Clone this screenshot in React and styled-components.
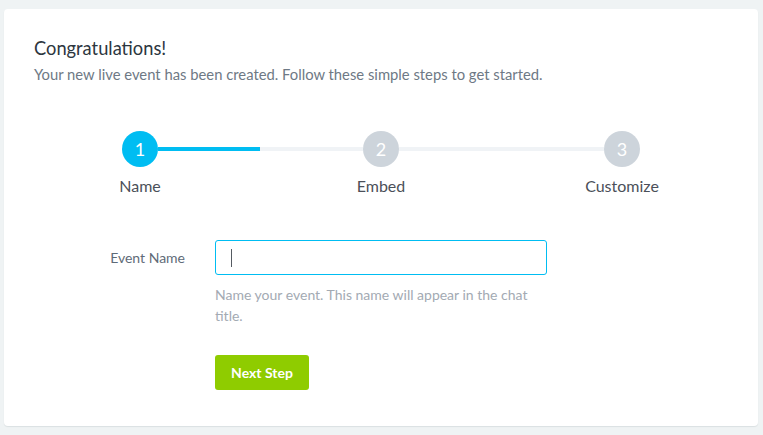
import styled, { createGlobalStyle } from 'styled-components';

const GlobalStyle = createGlobalStyle`
  html, body {
    margin: 0;
    padding: 0;
    background: #eff3f4;
    font-family: Lato, "Open Sans", Arial, sans-serif;
  }
  * {
    box-sizing: border-box;
  }
`;

//layout
const Page = styled.div`
  padding: 9px 5px 9px 4px;
`;

const Card = styled.section`
  background: #fff;
  border-radius: 4px;
  box-shadow: 0 1px 1px rgba(40, 60, 70, 0.1);
  min-height: 417px;
  padding: 28px 30px 36px;
`;

const Title = styled.h2`
  margin: 0;
  font-size: 18.3px;
  font-weight: 400;
  line-height: 22px;
  color: #2d3640;
`;

const Subtitle = styled.p`
  margin: 5px 0 0;
  font-size: 14.8px;
  line-height: 20px;
  color: #6e7985;
`;

//stepper
const Stepper = styled.div`
  margin-top: 47px;
  display: flex;
  flex-direction: column;
  align-items: center;
`;

const Track = styled.div`
  width: 518px;
  display: flex;
  align-items: center;
`;

const Circle = styled.div`
  width: 36px;
  height: 36px;
  border-radius: 50%;
  flex-shrink: 0;
  display: flex;
  align-items: center;
  justify-content: center;
  background: ${p => (p.$active ? '#00bdf2' : '#cdd4db')};
  color: #fff;
  font-size: 18px;
`;

const Connector = styled.div`
  flex: 1;
  height: 4px;
  background: ${p =>
    `linear-gradient(to right, #00bdf2 ${p.$fill}%, #f0f3f6 ${p.$fill}%)`};
`;

const Labels = styled.div`
  margin-top: 9px;
  display: grid;
  grid-template-columns: repeat(3, 241px);
`;

const StepLabel = styled.span`
  text-align: center;
  font-size: 16px;
  line-height: 20px;
  color: #4b5059;
`;

//form
const Form = styled.form`
  margin-top: 44px;
  display: grid;
  grid-template-columns: 151px 332px;
  column-gap: 30px;
  align-items: start;
`;

const FieldLabel = styled.label`
  grid-column: 1;
  text-align: right;
  font-size: 14px;
  line-height: 35px;
  color: #5f6b78;
`;

const Field = styled.div`
  grid-column: 2;
  display: flex;
  flex-direction: column;
  align-items: flex-start;
`;

const InputWrap = styled.div`
  position: relative;
  width: 100%;
`;

const TextInput = styled.input`
  width: 100%;
  height: 35px;
  border: 1px solid #00bdf2;
  border-radius: 3px;
  padding: 0 16px;
  font-family: inherit;
  font-size: 14px;
  color: #333;
  outline: none;
`;

const Caret = styled.span`
  position: absolute;
  left: 16px;
  top: 9px;
  width: 1px;
  height: 18px;
  background: #555b62;
`;

const Help = styled.p`
  margin: 9px 0 0;
  font-size: 14px;
  line-height: 21px;
  color: #a3aab3;
`;

const NextButton = styled.button`
  margin-top: 29px;
  width: 94px;
  height: 35px;
  border: none;
  border-radius: 3px;
  background: #8fcc00;
  color: #fff;
  font-family: inherit;
  font-weight: 700;
  font-size: 14px;
  cursor: pointer;
`;

const steps = ['Name', 'Embed', 'Customize'];

export default function App() {
  return (
    <>
      <GlobalStyle />
      <Page>
        <Card>
          <Title>Congratulations!</Title>
          <Subtitle>
            Your new live event has been created. Follow these simple steps to get started.
          </Subtitle>

          <Stepper>
            <Track>
              <Circle $active>1</Circle>
              <Connector $fill={50} />
              <Circle>2</Circle>
              <Connector $fill={0} />
              <Circle>3</Circle>
            </Track>
            <Labels>
              {steps.map(s => (
                <StepLabel key={s}>{s}</StepLabel>
              ))}
            </Labels>
          </Stepper>

          <Form onSubmit={e => e.preventDefault()}>
            <FieldLabel htmlFor="event-name">Event Name</FieldLabel>
            <Field>
              <InputWrap>
                <TextInput id="event-name" type="text" />
                <Caret />
              </InputWrap>
              <Help>Name your event. This name will appear in the chat title.</Help>
              <NextButton type="submit">Next Step</NextButton>
            </Field>
          </Form>
        </Card>
      </Page>
    </>
  );
}
